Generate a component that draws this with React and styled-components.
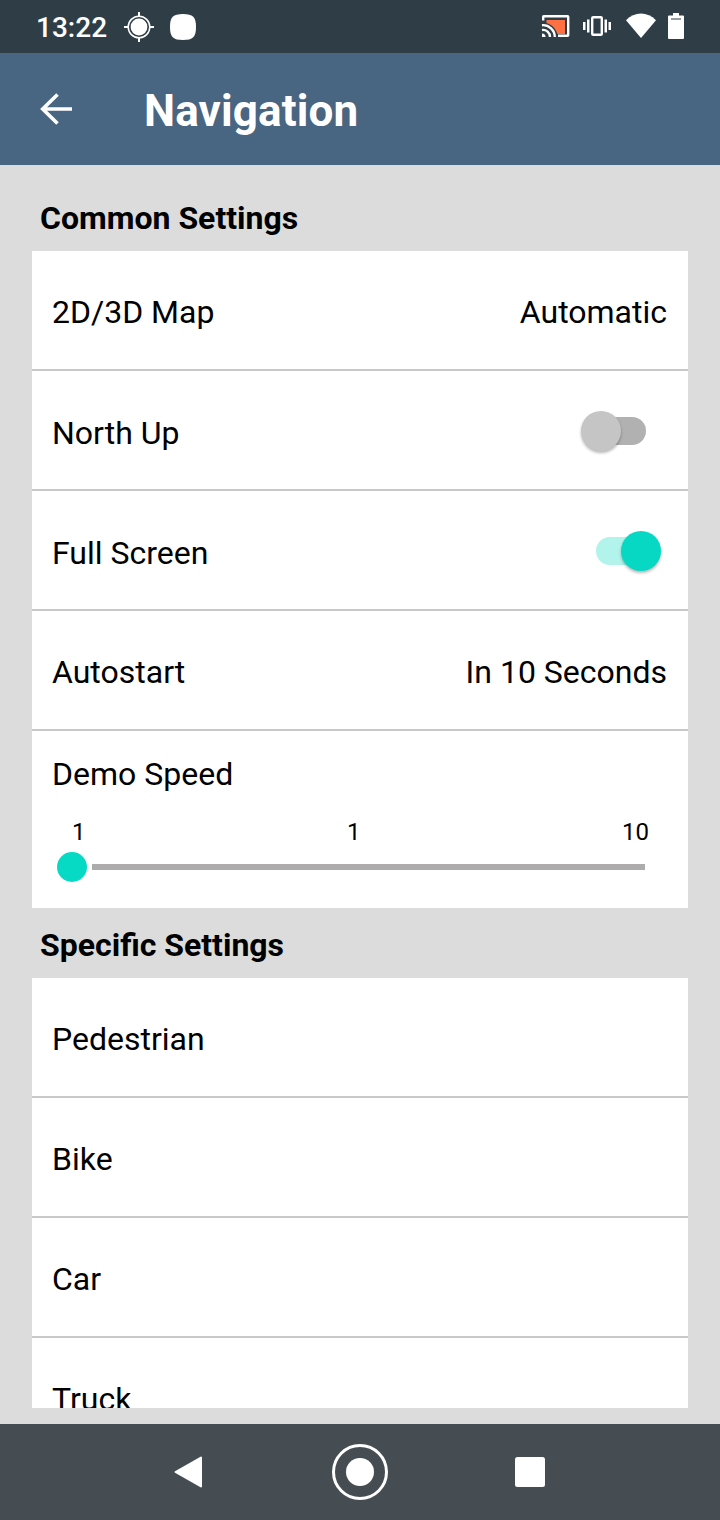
import React from 'react';
import styled, { createGlobalStyle } from 'styled-components';

const GlobalStyle = createGlobalStyle`
  * {
    box-sizing: border-box;
  }

  body {
    margin: 0;
    font-family: Roboto, sans-serif;
    color: #000;
  }
`;

const Screen = styled.div`
  display: flex;
  flex-direction: column;
  width: 720px;
  height: 1520px;
  overflow: hidden;
  background: #dcdcdc;
`;

const StatusBar = styled.div`
  display: flex;
  flex: none;
  align-items: center;
  justify-content: space-between;
  height: 53px;
  padding: 0 35px 0 36px;
  background: #2f3d47;
  color: #fff;
`;

const StatusGroup = styled.div`
  display: flex;
  align-items: center;
  gap: ${({ $gap }) => $gap}px;
`;

const Clock = styled.span`
  padding-top: 2px;
  font-size: 28px;
  font-weight: 500;
  line-height: 54px;
`;

const Icon = styled.svg`
  display: block;
  flex: none;
`;

const Header = styled.header`
  display: flex;
  flex: none;
  align-items: center;
  height: 112px;
  padding-left: 40px;
  background: #486581;
  color: #fff;
`;

const BackButton = styled.button`
  width: 104px;
  padding: 0;
  border: 0;
  background: none;
`;

const Title = styled.h1`
  margin: 0;
  padding-top: 4px;
  font-size: 44px;
  font-weight: 700;
  line-height: 52px;
  letter-spacing: 0.15px;
`;

const Content = styled.main`
  flex: 1;
  min-height: 0;
  margin: 16px 32px;
  overflow: hidden;
`;

const SectionTitle = styled.h2`
  height: 70px;
  margin: 0;
  padding: 18px 8px 0;
  font-size: 32px;
  font-weight: 700;
  line-height: 38px;
`;

const Card = styled.section`
  background: #fff;
`;

const Row = styled.div`
  display: flex;
  align-items: center;
  justify-content: space-between;
  height: 120px;
  padding: ${({ $toggle }) => ($toggle ? '2px 27px 0 20px' : '0 20px')};
  border-bottom: 2px solid #c8c8c8;
  font-size: 32px;
`;

const Label = styled.span`
  padding-top: 4px;
  line-height: 38px;
`;

const Value = styled(Label)`
  padding-right: 1px;
`;

const Switch = styled.span`
  position: relative;
  display: flex;
  justify-content: ${({ $on }) => ($on ? 'flex-end' : 'flex-start')};
  width: 80px;
  height: 40px;

  &::before {
    content: '';
    position: absolute;
    top: 6px;
    left: 15px;
    width: 50px;
    height: 28px;
    border-radius: 14px;
    background: ${({ $on }) => ($on ? '#b2f4eb' : '#b1b1b1')};
  }
`;

const Thumb = styled.span`
  position: relative;
  width: 40px;
  height: 40px;
  border-radius: 50%;
  background: ${({ $on }) => ($on ? '#06d8c3' : '#c5c5c5')};
  box-shadow: 0 2px 3px rgba(0, 0, 0, 0.28);
`;

const SpeedBlock = styled.div`
  height: 177px;
  padding: 24px 20px 0;
  font-size: 32px;
  line-height: 38px;
`;

const Scale = styled.div`
  display: flex;
  justify-content: space-between;
  margin-top: 25px;
  padding: 0 19px 0 20px;
  font-size: 24px;
  line-height: 28px;
`;

const Slider = styled.div`
  display: flex;
  align-items: center;
  gap: 5px;
  margin-top: 6px;
  padding: 0 23px 0 5px;
`;

const SliderThumb = styled.span`
  width: 30px;
  height: 30px;
  border-radius: 50%;
  background: #06dac5;
`;

const SliderTrack = styled.span`
  flex: 1;
  height: 6px;
  background: #adabac;
`;

const NavBar = styled.nav`
  display: flex;
  flex: none;
  align-items: center;
  justify-content: space-between;
  height: 96px;
  padding: 0 174px 0 172px;
  background: #454d53;
`;

const profiles = ['Pedestrian', 'Bike', 'Car', 'Truck'];

function ToggleRow({ label, on }) {
  return (
    <Row $toggle>
      <Label>{label}</Label>
      <Switch $on={on}>
        <Thumb $on={on} />
      </Switch>
    </Row>
  );
}

function ValueRow({ label, value }) {
  return (
    <Row>
      <Label>{label}</Label>
      <Value>{value}</Value>
    </Row>
  );
}

function StatusIcons() {
  return (
    <Icon width="144" height="30" viewBox="541 12 144 30" fill="#fff">
      <path d="M546.500 20h18.500v14h-7.500c-1.500-5-5.500-9.500-11-11z" fill="#ff7043" />
      <path
        d="M543.200 20.500v-3.800q0-.5.5-.5h24q.5 0 .5.500v18.600q0 .5-.5.500H558"
        fill="none"
        stroke="#fff"
        strokeWidth="2.400"
      />
      <path
        d="M542 25.200a11.800 11.800 0 0 1 12.800 11.800M542 30a7 7 0 0 1 8 7"
        fill="none"
        stroke="#fff"
        strokeWidth="2.400"
      />
      <path d="M542 33.500a3.500 3.500 0 0 1 3.500 3.500H542z" />
      <rect x="592.200" y="17.200" width="9.600" height="17.600" rx="1" fill="none" stroke="#fff" strokeWidth="2.400" />
      <path d="M583 22h2.500v8H583zM587 19.500h2.500v13H587zM604.500 19.500h2.500v13h-2.500zM608.500 22h2.500v8h-2.500z" />
      <path d="M626 20.300C634.500 11.200 647.500 11.200 656 20.300L641 38z" />
      <path d="M673 13h6v2.500h4q1 0 1 1V38q0 1-1 1h-14q-1 0-1-1V16.500q0-1 1-1h4z" />
      <path d="M671 18.500h10v1h-10z" fill="#2f3d47" />
    </Icon>
  );
}

function App() {
  return (
    <>
      <GlobalStyle />
      <Screen>
        <StatusBar>
          <StatusGroup $gap={16}>
            <Clock>13:22</Clock>
            <StatusGroup $gap={15}>
              <Icon width="32" height="32" viewBox="0 0 32 32">
                <circle cx="16" cy="16" r="8.400" fill="#fff" />
                <circle cx="16" cy="16" r="10.800" fill="none" stroke="#fff" strokeWidth="1.500" />
                <path d="M16 1v5M16 26v5M1 16h5M26 16h5" stroke="#fff" strokeWidth="2" />
              </Icon>
              <Icon width="26" height="26" viewBox="0 0 26 26">
                <path d="M13 0C23 0 26 3 26 13S23 26 13 26 0 23 0 13 3 0 13 0z" fill="#fff" />
              </Icon>
            </StatusGroup>
          </StatusGroup>
          <StatusIcons />
        </StatusBar>

        <Header>
          <BackButton aria-label="Back">
            <Icon width="32" height="32" viewBox="0 0 32 32" fill="none" stroke="#fff" strokeWidth="3.600">
              <path d="M32 16H3M17.500 1.500L2.700 16l14.800 14.500" />
            </Icon>
          </BackButton>
          <Title>Navigation</Title>
        </Header>

        <Content>
          <SectionTitle>Common Settings</SectionTitle>
          <Card>
            <ValueRow label="2D/3D Map" value="Automatic" />
            <ToggleRow label="North Up" on={false} />
            <ToggleRow label="Full Screen" on />
            <ValueRow label="Autostart" value="In 10 Seconds" />
            <SpeedBlock>
              Demo Speed
              <Scale>
                <span>1</span>
                <span>1</span>
                <span>10</span>
              </Scale>
              <Slider>
                <SliderThumb />
                <SliderTrack />
              </Slider>
            </SpeedBlock>
          </Card>

          <SectionTitle>Specific Settings</SectionTitle>
          <Card>
            {profiles.map(profile => (
              <Row key={profile}>
                <Label>{profile}</Label>
              </Row>
            ))}
          </Card>
        </Content>

        <NavBar>
          <Icon width="34" height="36" viewBox="0 0 34 36">
            <path d="M29 3.500v29L3.500 18z" fill="#fff" stroke="#fff" strokeWidth="2" strokeLinejoin="round" />
          </Icon>
          <Icon width="58" height="58" viewBox="0 0 58 58">
            <circle cx="29" cy="29" r="26.500" fill="none" stroke="#fff" strokeWidth="3" />
            <circle cx="29" cy="29" r="14" fill="#fff" />
          </Icon>
          <Icon width="32" height="32" viewBox="0 0 32 32">
            <rect x="1" y="1" width="30" height="30" rx="2.500" fill="#fff" />
          </Icon>
        </NavBar>
      </Screen>
    </>
  );
}

export default App;
